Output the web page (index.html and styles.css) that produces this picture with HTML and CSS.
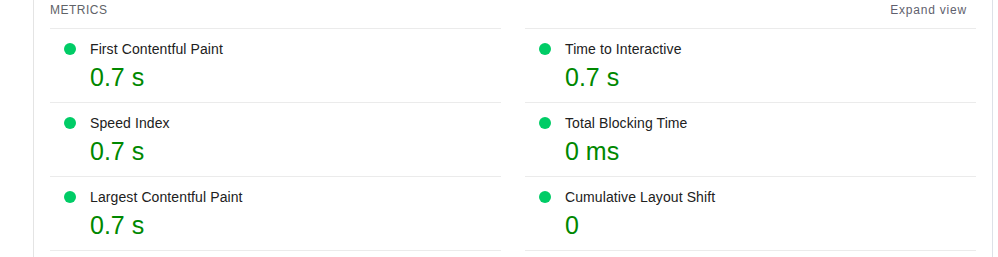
FILE: index.html
```html
<!DOCTYPE html>
<html>
<head>
<meta charset="utf-8">
<link rel="stylesheet" href="styles.css">
</head>
<body>
<div class="card">
  <div class="header">
    <span class="title">Metrics</span>
    <span class="toggle">Expand view</span>
  </div>
  <div class="grid">
    <div class="metric"><span class="dot"></span><div class="body"><div class="label">First Contentful Paint</div><div class="value">0.7&nbsp;s</div></div></div>
    <div class="metric"><span class="dot"></span><div class="body"><div class="label">Time to Interactive</div><div class="value">0.7&nbsp;s</div></div></div>
    <div class="metric"><span class="dot"></span><div class="body"><div class="label">Speed Index</div><div class="value">0.7&nbsp;s</div></div></div>
    <div class="metric"><span class="dot"></span><div class="body"><div class="label">Total Blocking Time</div><div class="value">0&nbsp;ms</div></div></div>
    <div class="metric last"><span class="dot"></span><div class="body"><div class="label">Largest Contentful Paint</div><div class="value">0.7&nbsp;s</div></div></div>
    <div class="metric last"><span class="dot"></span><div class="body"><div class="label">Cumulative Layout Shift</div><div class="value">0</div></div></div>
  </div>
</div>
</body>
</html>
```
FILE: styles.css
```css
html, body {
  margin: 0;
  padding: 0;
  background: #fff;
}
body {
  font-family: "Liberation Sans", Arial, sans-serif;
  color: #212121;
}
.card {
  margin-left: 33px;
  width: 960px;
  box-sizing: border-box;
  border-left: 1px solid #e4e4e4;
  border-right: 1px solid #dde1e7;
  padding: 0 16px;
  min-height: 257px;
}
.header {
  height: 28px;
  display: flex;
  justify-content: space-between;
  align-items: flex-start;
  box-sizing: border-box;
  padding: 3px 9px 0 0;
}
.title {
  font-size: 12px;
  text-transform: uppercase;
  letter-spacing: 0.5px;
  color: #5f6368;
  line-height: 14px;
}
.toggle {
  font-size: 12px;
  letter-spacing: 0.8px;
  color: #5f5f6e;
  line-height: 14px;
}
.grid {
  display: grid;
  grid-template-columns: 1fr 1fr;
  column-gap: 24px;
}
.metric {
  border-top: 1px solid #ebebeb;
  height: 74px;
  box-sizing: border-box;
  display: flex;
  padding: 10px 0 0 14px;
}
.metric.last {
  border-bottom: 1px solid #ebebeb;
  height: 75px;
}
.dot {
  width: 12px;
  height: 12px;
  border-radius: 50%;
  background: #0c6;
  margin-top: 4px;
  margin-right: 14px;
  flex: none;
}
.label {
  font-size: 14px;
  line-height: 20px;
  letter-spacing: 0.1px;
}
.value {
  font-size: 25px;
  line-height: 30px;
  color: #080;
  margin-top: 3px;
}
```
